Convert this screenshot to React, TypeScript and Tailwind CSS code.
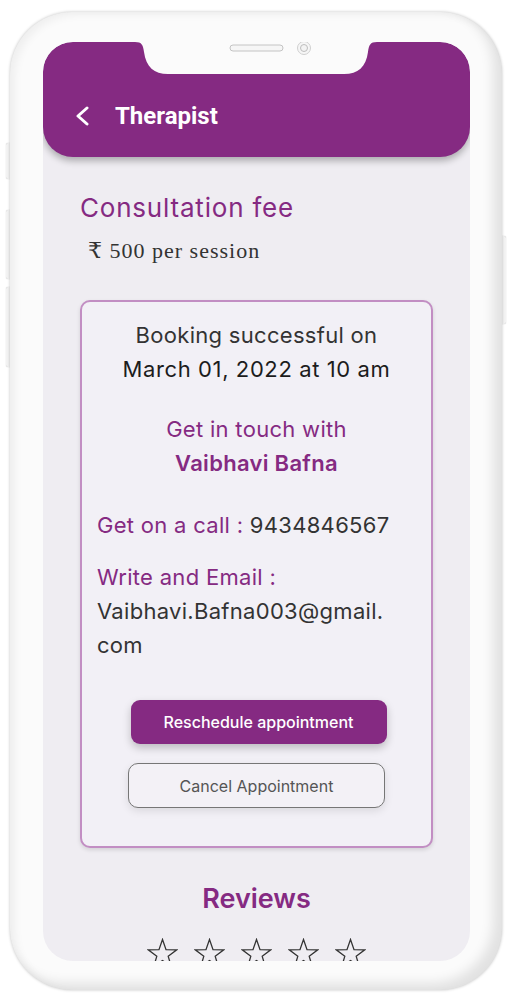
import React from "react";

const Star: React.FC = () => (
  <svg width="31" height="31" viewBox="0 0 31 31" fill="none">
    <path
      d="M15.5 1.5 L19.03 11.65 L29.77 11.86 L21.21 18.35 L24.32 28.64 L15.5 22.5 L6.68 28.64 L9.79 18.35 L1.23 11.86 L11.97 11.65 Z"
      stroke="#333"
      strokeWidth="1.3"
      strokeLinejoin="miter"
    />
  </svg>
);

const App: React.FC = () => {
  return (
    <div className="relative w-[512px] h-[996px] bg-white overflow-hidden pt-[12px] pl-[10px] font-['Inter',sans-serif]">
      {/* side buttons */}
      <div className="absolute left-[6px] top-[143px] w-[5px] h-[36px] rounded-l-[2px] bg-[#f3f3f3] shadow-[0_0_1px_rgba(0,0,0,0.3)]" />
      <div className="absolute left-[6px] top-[210px] w-[5px] h-[69px] rounded-l-[2px] bg-[#f3f3f3] shadow-[0_0_1px_rgba(0,0,0,0.3)]" />
      <div className="absolute left-[6px] top-[287px] w-[5px] h-[80px] rounded-l-[2px] bg-[#f3f3f3] shadow-[0_0_1px_rgba(0,0,0,0.3)]" />
      <div className="absolute left-[501px] top-[236px] w-[5px] h-[88px] rounded-r-[2px] bg-[#f3f3f3] shadow-[0_0_1px_rgba(0,0,0,0.3)]" />

      {/* phone frame */}
      <div className="relative w-[492px] h-[978px] rounded-[62px] bg-[#fbfbfb] pt-[30px] pl-[33px] pr-[32px] pb-[29px] shadow-[0_0_3px_rgba(0,0,0,0.25),inset_-9px_-7px_12px_rgba(0,0,0,0.10),inset_5px_3px_8px_rgba(0,0,0,0.05)]">
        <div className="relative h-full rounded-[30px] overflow-hidden bg-[#efedf2]">
          {/* header */}
          <div className="relative h-[115px] rounded-[30px] bg-[#852a82] shadow-[0_4px_7px_rgba(0,0,0,0.28)] flex items-center pt-[32px] pl-[32px] gap-[26px]">
            <svg
              className="absolute left-[92px] top-0"
              width="242"
              height="32"
              viewBox="0 0 242 32"
            >
              <path
                d="M0 0 C7 0 8 3 9 10 C11 25 19 32 33 32 H209 C223 32 231 25 233 10 C234 3 235 0 242 0 Z"
                fill="#fbfbfb"
              />
              <rect x="95" y="3" width="53" height="6" rx="3" fill="#f6f6f6" stroke="#c4c4c4" strokeWidth="1" />
              <circle cx="169" cy="6" r="6.5" fill="#f6f6f6" stroke="#cfcfcf" strokeWidth="1" />
              <circle cx="169" cy="6" r="3.5" fill="#f3f3f3" stroke="#bdbdbd" strokeWidth="1" />
            </svg>
            <svg width="14" height="20" viewBox="0 0 14 20" fill="none">
              <polyline points="12,2 3,10 12,18" stroke="#ffffff" strokeWidth="3" strokeLinecap="round" strokeLinejoin="round" />
            </svg>
            <span className="font-['Roboto',sans-serif] font-bold text-[24px] leading-[28px] text-white">
              Therapist
            </span>
          </div>

          {/* content */}
          <div className="px-[37px]">
            <h2 className="mt-[36px] text-[26px] leading-[30px] tracking-[0.8px] text-[#852a82]">
              Consultation fee
            </h2>
            <p className="mt-[16px] pl-[8px] font-['Liberation_Serif','DejaVu_Serif',serif] text-[22px] leading-[24px] tracking-[1px] text-[#333]">
              ₹ 500 per session
            </p>

            {/* booking card */}
            <div className="mt-[37px] rounded-[10px] border-2 border-[#c28ec3] bg-[#f2f0f6] shadow-[0_2px_4px_rgba(0,0,0,0.12)] pt-[16px] pb-[38px] px-[15px] text-[22px] leading-[34px] tracking-[0.3px]">
              <div className="text-center">
                <p className="text-[#333]">Booking successful on</p>
                <p className="text-[#1c1c1c] tracking-[0.6px]">March 01, 2022 at 10 am</p>
              </div>
              <div className="mt-[26px] text-center text-[#852a82]">
                <p>Get in touch with</p>
                <p className="font-semibold">Vaibhavi Bafna</p>
              </div>
              <p className="mt-[28px] text-[#333]">
                <span className="text-[#852a82]">Get on a call : </span>9434846567
              </p>
              <div className="mt-[18px]">
                <p className="text-[#852a82]">Write and Email :</p>
                <p className="text-[#333]">Vaibhavi.Bafna003@gmail.</p>
                <p className="text-[#333]">com</p>
              </div>
              <div className="mt-[38px] flex flex-col items-center gap-[19px] tracking-normal">
                <button className="relative left-[2px] w-[256px] h-[44px] rounded-[9px] bg-[#852a82] text-white text-[16px] font-medium shadow-[0_4px_8px_rgba(0,0,0,0.22)]">
                  Reschedule appointment
                </button>
                <button className="w-[257px] h-[45px] rounded-[10px] border border-[#767676] bg-[#f3f1f6] text-[#555] text-[16px] shadow-[0_3px_8px_rgba(0,0,0,0.10)]">
                  Cancel Appointment
                </button>
              </div>
            </div>

            {/* reviews */}
            <h3 className="mt-[35px] text-center text-[27px] leading-[32px] font-semibold text-[#852a82]">
              Reviews
            </h3>
            <div className="mt-[23px] flex justify-center gap-[16px]">
              <Star />
              <Star />
              <Star />
              <Star />
              <Star />
            </div>
          </div>
        </div>
      </div>
    </div>
  );
};

export default App;
